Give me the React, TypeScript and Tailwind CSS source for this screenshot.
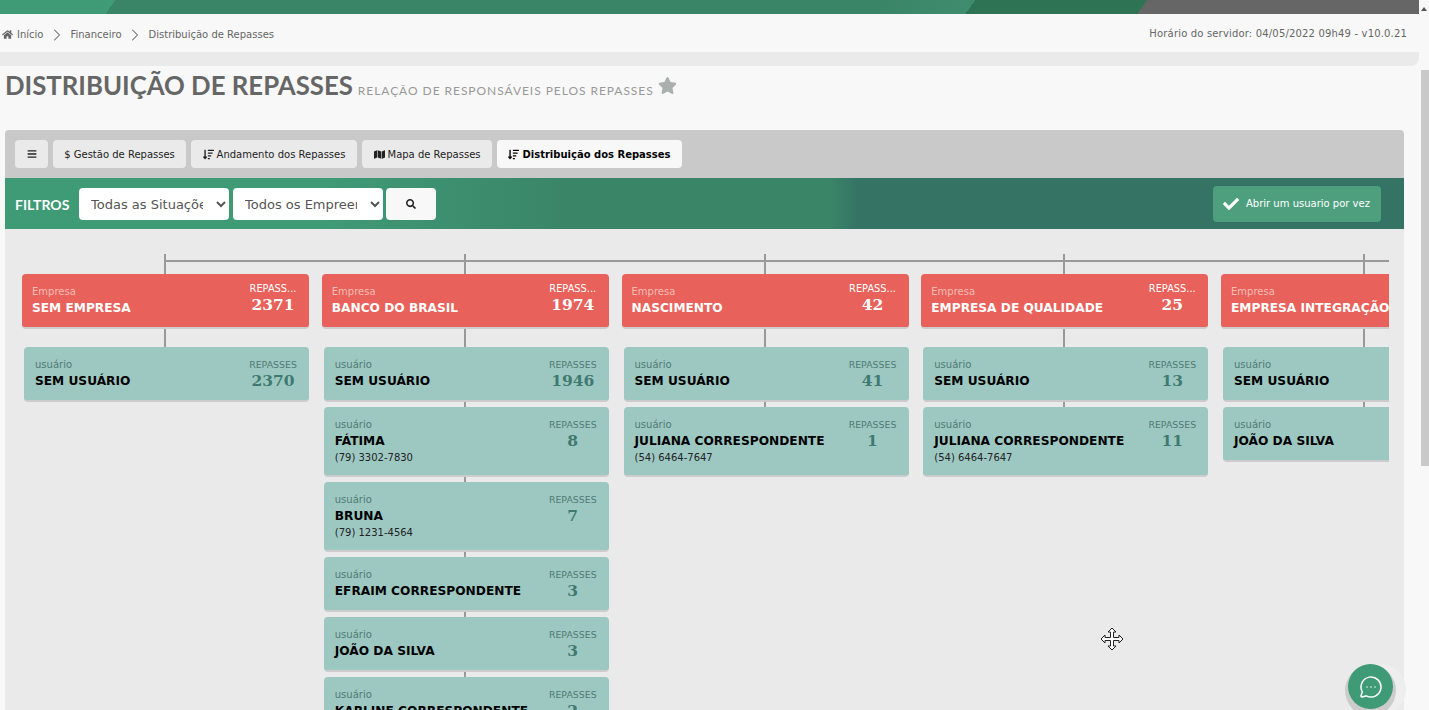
import { FaBars, FaCheck, FaHome, FaMap, FaSearch, FaSortAmountDown, FaStar } from "react-icons/fa";
import { ChevronRight, MessageCircleMore } from "lucide-react";

type UserRow = { name: string; phone?: string; total: number };
type Company = { name: string; total: number; users: UserRow[] };

const companies: Company[] = [
  { name: "SEM EMPRESA", total: 2371, users: [{ name: "SEM USUÁRIO", total: 2370 }] },
  {
    name: "BANCO DO BRASIL",
    total: 1974,
    users: [
      { name: "SEM USUÁRIO", total: 1946 },
      { name: "FÁTIMA", phone: "(79) 3302-7830", total: 8 },
      { name: "BRUNA", phone: "(79) 1231-4564", total: 7 },
      { name: "EFRAIM CORRESPONDENTE", total: 3 },
      { name: "JOÃO DA SILVA", total: 3 },
      { name: "KARLINE CORRESPONDENTE", total: 2 },
    ],
  },
  {
    name: "NASCIMENTO",
    total: 42,
    users: [
      { name: "SEM USUÁRIO", total: 41 },
      { name: "JULIANA CORRESPONDENTE", phone: "(54) 6464-7647", total: 1 },
    ],
  },
  {
    name: "EMPRESA DE QUALIDADE",
    total: 25,
    users: [
      { name: "SEM USUÁRIO", total: 13 },
      { name: "JULIANA CORRESPONDENTE", phone: "(54) 6464-7647", total: 11 },
    ],
  },
  {
    name: "EMPRESA INTEGRAÇÃO",
    total: 9,
    users: [
      { name: "SEM USUÁRIO", total: 5 },
      { name: "JOÃO DA SILVA", total: 4 },
    ],
  },
];

const sans = "font-['DejaVu_Sans',sans-serif]";
const lato = "font-['Lato',sans-serif]";
const serif = "font-['DejaVu_Serif',serif]";

const TabButton = ({ active, className, children }: { active?: boolean; className?: string; children: React.ReactNode }) => (
  <button
    className={`flex h-7 items-center justify-center gap-[3px] rounded text-[10px] ${className ?? "px-3"} ${active ? "bg-[#f8f8f8] font-bold text-black" : "bg-[#eaeaea] text-[#222]"}`}
  >
    {children}
  </button>
);

const CompanyCard = ({ company, first }: { company: Company; first: boolean }) => (
  <div className="relative w-[299.75px] shrink-0">
    {/* linha horizontal que liga as empresas */}
    <div className={`absolute right-0 top-[6px] h-0.5 bg-[#999] ${first ? "left-[142px]" : "left-0"}`} />
    <div className="ml-[142px] h-5 w-0.5 bg-[#999]" />
    <div className="flex h-[55px] w-[287px] items-start justify-between rounded border-b-2 border-[#ccc] bg-[#e8615a] pl-[10px] pr-[12px] text-white">
      <div className="min-w-0 whitespace-nowrap pt-[12px]">
        <div className="text-[10px] leading-3 text-[#f5bdb5]">Empresa</div>
        <div className="mt-[2px] text-[12.2px] font-bold leading-[16px]">{company.name}</div>
      </div>
      <div className="w-[48px] shrink-0 pt-[9px] text-center">
        <div className="whitespace-nowrap text-[9.8px] leading-3">REPASS...</div>
        <div className={`${serif} text-[15.5px] font-bold leading-[19px]`}>{company.total}</div>
      </div>
    </div>
    <div className="ml-[142px] h-[18px] w-0.5 bg-[#999]" />
    {company.users.map((user, i) => (
      <div key={user.name + i}>
        {i > 0 && <div className="ml-[142px] h-[5px] w-0.5 bg-[#999]" />}
        <div className="ml-[2px] flex w-[285px] items-start justify-between rounded border-b-2 border-[#ccc] bg-[#9dc8c2] pb-[11px] pl-[11px] pr-[12px] pt-[12px] text-black">
          <div className="min-w-0 whitespace-nowrap">
            <div className="text-[10px] leading-3 text-[#4f7a72]">usuário</div>
            <div className="mt-[2px] text-[12.2px] font-bold leading-[16px]">{user.name}</div>
            {user.phone && <div className="mt-[2px] text-[10px] leading-[13px] text-[#222]">{user.phone}</div>}
          </div>
          <div className="w-[48px] shrink-0 text-center">
            <div className="text-[9.4px] leading-3 text-[#4f7a72]">REPASSES</div>
            <div className={`${serif} mt-[1px] text-[15.5px] font-bold leading-[17px] text-[#3f7a70]`}>{user.total}</div>
          </div>
        </div>
      </div>
    ))}
  </div>
);

const App = () => {
  return (
    <div className={`${sans} relative flex h-[710px] w-full overflow-hidden bg-[#f8f8f8]`}>
      <div className="flex w-[1419px] shrink-0 flex-col">
        <div className="h-[14px] bg-[linear-gradient(125.5deg,#3f9a76_94px,#3a8568_94px,#3a8568_720px,#3f8d6e_794px,#2f7355_794px,#2f7355_934px,#666_934px)]" />
        <div className="flex h-[38px] items-center justify-between pl-[2px] pr-3 text-[10px] text-[#666]">
          <div className="mt-[3px] flex items-center">
            <FaHome className="mr-[4px] text-[11px]" />
            <span>Início</span>
            <ChevronRight size={20} strokeWidth={1.25} className="mx-[3.5px]" />
            <span>Financeiro</span>
            <ChevronRight size={20} strokeWidth={1.25} className="mx-[3.5px]" />
            <span>Distribuição de Repasses</span>
          </div>
          <span className="tracking-[0.17px]">Horário do servidor: 04/05/2022 09h49 - v10.0.21</span>
        </div>
        <div className="h-[14px] rounded-br-lg bg-[#eaeaea]" />

        <div className="flex h-[64px] items-start pl-[5px] pt-[1px]">
          <h1 className={`${lato} text-[25.75px] font-bold leading-[36px] text-[#666]`}>DISTRIBUIÇÃO DE REPASSES</h1>
          <span className={`${lato} ml-[5px] mt-[15px] text-[12px] leading-[18px] tracking-[0.95px] text-[#999]`}>
            RELAÇÃO DE RESPONSÁVEIS PELOS REPASSES
          </span>
          <FaStar className="ml-[4px] mt-[9px] text-[19px] text-[#a9b0ae]" />
        </div>

        <div className="ml-[5px] flex min-h-0 w-[1399px] flex-1 flex-col">
          <div className="flex h-12 shrink-0 items-center gap-[5px] rounded-t bg-[#c9c9c9] px-[10px]">
            <TabButton className="w-[33px]">
              <FaBars className="text-[10px]" />
            </TabButton>
            <TabButton className="w-[133px]">$ Gestão de Repasses</TabButton>
            <TabButton className="w-[166px]">
              <FaSortAmountDown className="text-[11px]" /> Andamento dos Repasses
            </TabButton>
            <TabButton className="w-[130px]">
              <FaMap className="text-[11px]" /> Mapa de Repasses
            </TabButton>
            <TabButton active className="w-[185px]">
              <FaSortAmountDown className="text-[11px]" /> Distribuição dos Repasses
            </TabButton>
          </div>

          <div className="flex h-[51px] shrink-0 items-center bg-[linear-gradient(90deg,#3f9a76_23%,#3a8568_40%,#3a8568_59%,#357365_61%)] px-[10px]">
            <span className={`${lato} mt-[2px] w-[64px] text-[14px] font-bold text-white`}>FILTROS</span>
            <select className="h-8 w-[150px] rounded bg-white pl-2 pr-[10px] pt-[1px] text-[13px] text-[#555]">
              <option>Todas as Situações</option>
            </select>
            <select className="ml-1 h-8 w-[150px] rounded bg-white pl-2 pr-[10px] pt-[1px] text-[13px] text-[#555]">
              <option>Todos os Empreendimentos</option>
            </select>
            <button className="ml-[3px] flex h-8 w-[50px] items-center justify-center rounded bg-[#f8f8f8] text-[10px] text-[#222]">
              <FaSearch />
            </button>
            <button className="ml-auto mr-[13px] flex h-9 w-[168px] items-center gap-[7px] rounded bg-[#4e9f7e] pl-[10px] text-[10px] text-white">
              <FaCheck className="text-[16px]" /> Abrir um usuario por vez
            </button>
          </div>

          <div className="min-h-0 flex-1 bg-[#eaeaea] pl-[17px] pr-[15px] pt-[25px]">
            <div className="flex overflow-hidden">
              {companies.map((company, i) => (
                <CompanyCard key={company.name} company={company} first={i === 0} />
              ))}
            </div>
          </div>
        </div>
      </div>

      {/* barra de rolagem */}
      <div className="flex w-[10px] flex-col items-end">
        <div className="mr-[2px] mt-[7px] h-0 w-0 border-x-[3px] border-b-[4px] border-x-transparent border-b-[#555]" />
        <div className="mt-[59px] h-[396px] w-2 bg-[#c9c9c9]" />
      </div>

      {/* cursor de mover */}
      <svg className="absolute left-[1100px] top-[627px]" width="24" height="24" viewBox="0 0 24 24">
        <path
          d="M12 1l4 4h-2.5v5.5H19V8l4 4-4 4v-2.5h-5.5V19H16l-4 4-4-4h2.5v-5.5H5V16l-4-4 4-4v2.5h5.5V5H8z"
          fill="#fff"
          stroke="#222"
          strokeWidth="1"
        />
      </svg>

      <div className="absolute left-[1348px] top-[664px] flex h-[45px] w-[45px] items-center justify-center rounded-full bg-[#3f9a76] text-white shadow-[0_4px_0_3px_#ccc,10px_3px_0_3px_#eee]">
        <MessageCircleMore size={24} strokeWidth={1.5} />
      </div>
    </div>
  );
};

export default App;
